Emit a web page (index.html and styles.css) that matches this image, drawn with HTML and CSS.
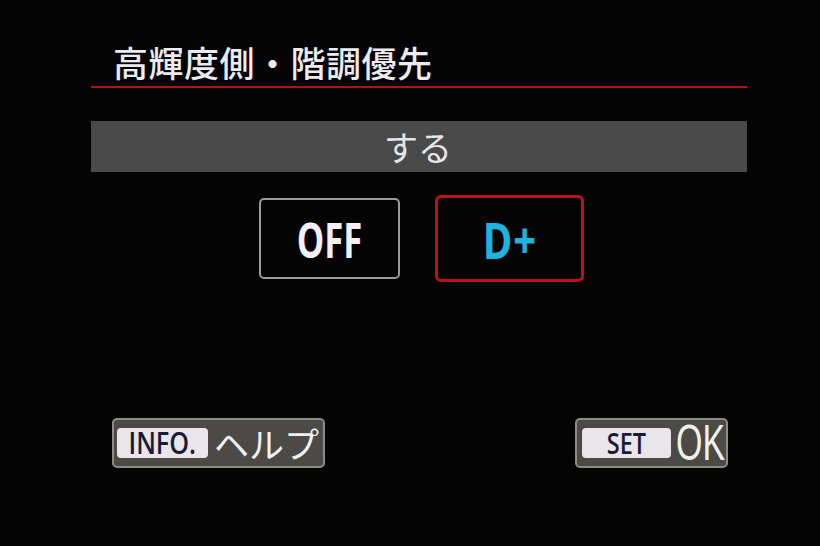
FILE: index.html
```html
<!DOCTYPE html>
<html lang="ja">
<head>
    <meta charset="UTF-8">
    <meta name="viewport" content="width=device-width, initial-scale=1.0">
    <title>高輝度側・階調優先</title>
    <link rel="stylesheet" href="styles.css">
</head>
<body>
    <div class="screen">
        <!-- メニュー見出し -->
        <h1 class="menu-title">高輝度側・階調優先</h1>

        <!-- 現在の設定値 -->
        <div class="current-value">する</div>

        <!-- 選択肢 -->
        <div class="options">
            <div class="option"><span class="option-label">OFF</span></div>
            <div class="option selected"><span class="option-label">D+</span></div>
        </div>

        <!-- 下部ボタン -->
        <div class="footer">
            <div class="hint">
                <span class="key"><span class="key-label">INFO.</span></span>
                <span class="hint-text">ヘルプ</span>
            </div>
            <div class="hint hint-ok">
                <span class="key key-set"><span class="key-label">SET</span></span>
                <span class="hint-ok-text">OK</span>
            </div>
        </div>
    </div>
</body>
</html>
```

FILE: styles.css
```css
body {
    margin: 0;
    background-color: #040404;
    font-family: "Noto Sans CJK JP", "Noto Sans", sans-serif;
    color: #ecebf2;
    height: 546px;
    overflow: hidden;
}

.screen {
    display: flex;
    flex-direction: column;
    padding: 0 73px 0 91px;
}

.menu-title {
    margin: 40px 0 0;
    padding-left: 22px;
    font-size: 35px;
    font-weight: 500;
    line-height: 44px;
    height: 46px;
    border-bottom: 2px solid #b0121e;
    letter-spacing: 0.5px;
}

.current-value {
    margin-top: 33px;
    height: 51px;
    background-color: #4a4a4a;
    text-align: center;
    font-size: 34px;
    line-height: 51px;
    color: #e6e6ea;
    padding-right: 2px;
}

.options {
    display: flex;
    justify-content: center;
    align-items: center;
    gap: 35px;
    margin-top: 23px;
    padding-left: 5px;
}

.option {
    width: 137px;
    height: 77px;
    border: 2px solid #9a9a9c;
    border-radius: 5px;
    display: flex;
    align-items: center;
    justify-content: center;
    font-family: "Open Sans", sans-serif;
    font-weight: 700;
    font-size: 48px;
    color: #f2f0f4;
}

/* 細身の書体に見せるため横方向だけ縮める */
.option-label {
    display: inline-block;
    transform: scaleX(0.72);
    line-height: 1;
    margin-top: 2px;
}

.option.selected {
    width: 143px;
    height: 81px;
    border: 3px solid #bc111d;
    border-radius: 6px;
    color: #1fb3e0;
    font-size: 50px;
}

.option.selected .option-label {
    transform: scaleX(0.8);
    letter-spacing: 1px;
}

.footer {
    display: flex;
    justify-content: space-between;
    align-items: center;
    margin-top: 136px;
    padding: 0 19px 0 21px;
}

.hint {
    display: flex;
    align-items: center;
    height: 46px;
    padding: 0 4px 0 3px;
    border: 2px solid #8c8b88;
    border-radius: 5px;
    background-color: #4b4a46;
}

.key {
    display: flex;
    align-items: center;
    justify-content: center;
    width: 91px;
    height: 30px;
    border-radius: 4px;
    background-color: #e8e6ea;
    color: #1b1b38;
    font-family: "Open Sans", sans-serif;
    font-weight: 600;
    font-size: 30px;
}

.key-label {
    display: inline-block;
    transform: scaleX(0.84);
    line-height: 1;
}

.hint-text {
    margin-left: 6px;
    font-size: 35px;
    line-height: 40px;
    color: #f0eff2;
}

.key-set {
    width: 89px;
    margin-left: 2px;
    font-size: 28px;
}

.hint-ok-text {
    display: inline-block;
    width: 46px;
    margin-left: 5px;
    font-family: "Liberation Sans", sans-serif;
    font-size: 50px;
    line-height: 46px;
    color: #f2f0ea;
    transform: scaleX(0.68);
    transform-origin: left center;
}
```
